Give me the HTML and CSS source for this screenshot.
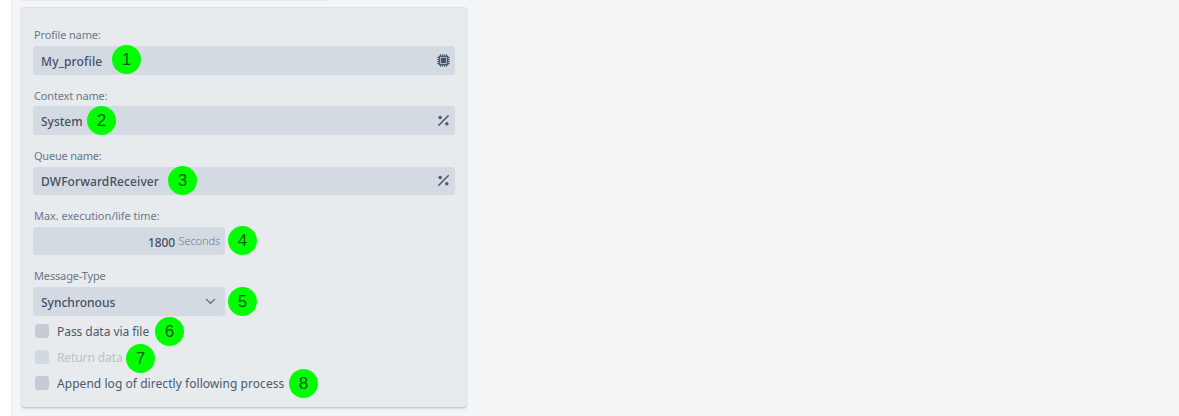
FILE: index.html
```html
<!DOCTYPE html>
<html lang="en">
<head>
<meta charset="utf-8">
<title>Profile settings</title>
<link rel="stylesheet" href="styles.css">
</head>
<body>
<main class="page">
  <div class="previous-panel"></div>
  <form class="card">
    <div class="field">
      <label class="label">Profile name:</label>
      <div class="input"><span class="value v-profile">My_profile</span>
        <svg class="icon chip" width="13" height="13" viewBox="0 0 13 13"><path d="M3.5 0v13M5.5 0v13M7.5 0v13M9.5 0v13M0 3.5h13M0 5.5h13M0 7.5h13M0 9.5h13" stroke="#4b5a6c" stroke-width=".8"/><rect x="1.5" y="1.5" width="10" height="10" rx="1.2" fill="#4b5a6c"/><rect x="3.5" y="3.5" width="6" height="6" fill="#46566a" stroke="#b5bfca" stroke-width=".9"/></svg>
      </div>
      <span class="badge b1">1</span>
    </div>
    <div class="field">
      <label class="label l-context">Context name:</label>
      <div class="input"><span class="value">System</span>
        <svg class="icon" width="11" height="11" viewBox="0 0 11 11"><path d="M.8 10.2 10.2.8" stroke="#4b5a6c" stroke-width="1.5" stroke-linecap="round"/><circle cx="2.2" cy="2.4" r="1.75" fill="#4b5a6c"/><circle cx="8.8" cy="8.8" r="1.75" fill="#4b5a6c"/></svg>
      </div>
      <span class="badge b2">2</span>
    </div>
    <div class="field">
      <label class="label l-queue">Queue name:</label>
      <div class="input shorter"><span class="value v-queue">DWForwardReceiver</span>
        <svg class="icon" width="11" height="11" viewBox="0 0 11 11"><path d="M.8 10.2 10.2.8" stroke="#4b5a6c" stroke-width="1.5" stroke-linecap="round"/><circle cx="2.2" cy="2.4" r="1.75" fill="#4b5a6c"/><circle cx="8.8" cy="8.8" r="1.75" fill="#4b5a6c"/></svg>
      </div>
      <span class="badge b3">3</span>
    </div>
    <div class="field">
      <label class="label l-max">Max. execution/life time:</label>
      <div class="input narrow shorter duration"><span class="value v-num">1800</span><span class="unit">Seconds</span></div>
      <span class="badge b4">4</span>
    </div>
    <div class="field">
      <label class="label">Message-Type</label>
      <div class="input narrow"><span class="value">Synchronous</span>
        <svg class="icon chevron" width="11" height="7" viewBox="0 0 11 7"><path d="m1 1 4.5 4.3L10 1" fill="none" stroke="#647285" stroke-width="1.3"/></svg>
      </div>
      <span class="badge b5">5</span>
    </div>
    <div class="checks">
      <div class="check"><span class="box"></span><span class="check-text c-pass">Pass data via file</span><span class="badge b6">6</span></div>
      <div class="check disabled"><span class="box"></span><span class="check-text c-return">Return data</span><span class="badge b7">7</span></div>
      <div class="check"><span class="box"></span><span class="check-text c-append">Append log of directly following process</span><span class="badge b8">8</span></div>
    </div>
  </form>
</main>
</body>
</html>
```

FILE: styles.css
```css
* { box-sizing: border-box; }
body { margin: 0; background: #fff; font-family: "Noto Sans", "Open Sans", sans-serif; }
.page { height: 416px; margin-left: 11px; padding-left: 9px; background: #f3f5f7; border-left: 1px solid #e7eaed; overflow: hidden; }
.previous-panel { width: 306px; height: 1px; margin-left: 1px; background: #e9ebee; margin-bottom: 6px; }
.card { width: 446px; height: 401px; padding: 19px 11px 0; background: #e7ebee; border: 1px solid #dde2e7; border-bottom: 1px solid #c7ced7; border-radius: 4px; box-shadow: 0 1px 2px #d5dae0; }
.field { position: relative; height: 60.25px; }
.label { display: block; height: 19px; line-height: 16px; font-size: 11px; letter-spacing: -.15px; color: #69778a; white-space: nowrap; padding-left: 1px; }
.l-context { line-height: 18px; }
.l-queue { letter-spacing: -.22px; }
.l-max { letter-spacing: -.05px; }
.input { width: 422px; height: 29px; display: flex; align-items: center; padding: 2px 6px 0 8px; background: #d3dae2; border-radius: 3px; }
.input.narrow { width: 192px; }
.input.shorter { height: 28px; }
.value { font-size: 12px; line-height: 18px; font-weight: 500; color: #435164; white-space: nowrap; }
.v-profile { letter-spacing: .15px; }
.v-queue { letter-spacing: .1px; }
.v-num { letter-spacing: -.1px; transform: translateY(1px); }
.icon { margin-left: auto; transform: translateY(-1px); }
.chip { margin-right: -1px; }
.chevron { margin-right: 3px; }
.duration { justify-content: flex-end; padding: 3px 5px 0 0; gap: 3.5px; }
.unit { font-size: 11px; line-height: 16px; font-weight: 300; color: #6f7e91; letter-spacing: -.1px; transform: translateY(-1px); }
.badge { position: absolute; width: 29px; height: 29px; border-radius: 50%; background: #0f0; color: #065e06; font: 17px/29px "Liberation Sans", Arial, sans-serif; text-align: center; }
.b1 { left: 79px; top: 18px; }
.b2 { left: 54px; top: 19px; }
.b3 { left: 135px; top: 18.5px; }
.b4 { left: 195px; top: 18.25px; }
.b5 { left: 195px; top: 19px; }
.checks { padding: 0 2px; margin-top: -9.25px; display: flex; flex-direction: column; }
.check { position: relative; height: 26px; display: flex; align-items: center; gap: 8px; }
.check:last-child { height: 25px; }
.box { width: 14px; height: 14px; border-radius: 3px; background: #c5ccd5; transform: translateY(-1px); }
.check-text { font-size: 12px; line-height: 18px; color: #4b596b; white-space: nowrap; }
.c-pass { letter-spacing: -.05px; }
.c-return { letter-spacing: -.1px; }
.c-append { letter-spacing: .05px; }
.disabled .box { background: #d3d9e1; }
.disabled .check-text { color: #b9c1cc; }
.b6 { left: 120px; top: -2px; }
.b7 { left: 91px; top: -1px; }
.b8 { left: 254px; top: -2px; }
```
